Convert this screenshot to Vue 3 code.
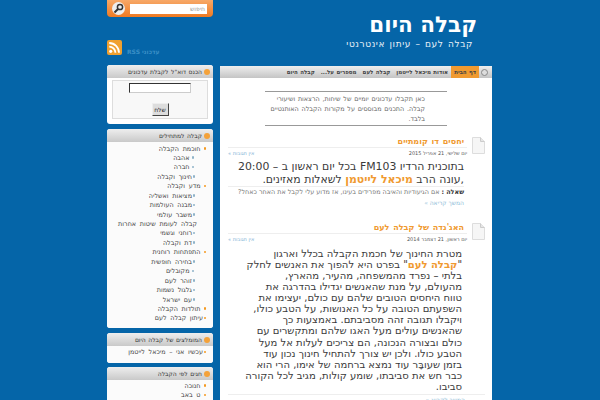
<script setup>
const nav = ['דף הבית','אודות מיכאל לייטמן','קבלה לעם','מספרים על...','קבלה היום']
const menu = [
  ['חוכמת הקבלה','o'],['אהבה','b'],['חברה','b'],['חינוך וקבלה','bj'],['מדע וקבלה','o'],['מציאות ואשליה','bj'],['מבנה העולמות','bj'],['משבר עולמי','bj'],['קבלה לעומת שיטות אחרות','n'],['רוחני וגשמי','bj'],['דת וקבלה','bj'],['התפתחות רוחנית','o'],['בחירה חופשית','bj'],['מקובלים','b'],['זוהר לעם','bj'],['גלגול נשמות','bj'],['עם ישראל','bj'],['תולדות הקבלה','o'],['עיתון קבלה לעם','oj']
]
const lines = ['מטרת החינוך של חכמת הקבלה בכלל וארגון','בפרט היא להפוך את האנשים לחלק','בלתי – נפרד מהמשפחה, מהעיר, מהארץ,','מהעולם, על מנת שהאנשים יגדילו בהדרגה את','טווח היחסים הטובים שלהם עם כולם, יעצימו את','השפעתם הטובה על כל האנושות, על הטבע כולו,','ויקבלו תגובה זהה מסביבתם. באמצעות כך','שהאנשים עולים מעל האגו שלהם ומתקשרים עם','כולם ובצורה הנכונה, הם צריכים לעלות אל מעל','הטבע כולו. ולכן יש צורך להתחיל חינוך נכון עוד','בזמן שעובָּר עוד נמצא ברחמה של אימו, הרי הוא','כבר חש את סביבתו, שומע קולות, מגיב לכל הקורה','סביבו.']
</script>

<template>
  <div class="page" dir="ltr">
    <aside class="side">
      <div class="search">
        <span class="lens"><svg width="13" height="13" viewBox="0 0 13 13"><circle cx="8" cy="5" r="2.6" fill="none" stroke="#333" stroke-width="1.5"/><path d="M6 7 2.5 10.5" stroke="#333" stroke-width="2"/></svg></span>
        <div class="field" dir="rtl">חיפוש</div>
      </div>
      <div class="rss">
        <svg width="15" height="15" viewBox="0 0 15 15"><rect width="15" height="15" rx="2" fill="#f0a030"/><circle cx="3.7" cy="11.3" r="1.6" fill="#fff"/><path d="M2.2 6.6a6.2 6.2 0 0 1 6.2 6.2M2.2 3a9.8 9.8 0 0 1 9.8 9.8" fill="none" stroke="#fff" stroke-width="1.8"/></svg>
        <span dir="rtl">עדכוני RSS</span>
      </div>
      <section class="panel">
        <h3 dir="rtl"><i class="ball"></i>הכנס דוא"ל לקבלת עדכונים</h3>
        <div class="form">
          <div class="inner">
            <div class="input"></div>
            <div class="send">שלח</div>
          </div>
        </div>
      </section>
      <section class="panel">
        <h3 dir="rtl"><i class="ball"></i>קבלה למתחילים</h3>
        <ul class="list" dir="rtl">
          <li v-for="m in menu" :key="m[0]" :class="m[1]">{{ m[0] }}</li>
        </ul>
      </section>
      <section class="panel">
        <h3 dir="rtl"><i class="ball"></i>המומלצים של קבלה היום</h3>
        <ul class="list rec" dir="rtl"><li class="oj">עכשיו אני – מיכאל לייטמן</li></ul>
      </section>
      <section class="panel">
        <h3 dir="rtl"><i class="ball"></i>חגים לפי הקבלה</h3>
        <ul class="list holidays" dir="rtl"><li class="o">חנוכה</li><li class="o">ט באב</li></ul>
      </section>
    </aside>
    <div class="right">
      <header class="head" dir="rtl">
        <h1>קבלה היום</h1>
        <p>קבלה לעם – עיתון אינטרנטי</p>
      </header>
      <main class="main">
        <nav class="nav" dir="rtl">
          <i class="dot"></i>
          <a v-for="(n,i) in nav" :key="n" :class="{ on: i===0 }">{{ n }}</a>
        </nav>
        <div class="content" dir="rtl">
          <blockquote>כאן תקבלו עדכונים יומיים של שיחות, הרצאות ושיעורי קבלה. התכנים מבוססים על מקורות הקבלה האותנטיים בלבד.</blockquote>
          <article>
            <div class="top">
              <svg class="doc" width="13" height="17" viewBox="0 0 13 17"><path d="M.5.5h8l4 4v12H.5z" fill="#f6f6f6" stroke="#ddd"/><path d="M8.5.5v4h4" fill="#e6e6e6" stroke="#ccc"/></svg>
              <div class="heading">
                <h2>יחסים דו קומתיים</h2>
                <div class="meta"><span>יום שלישי, 21 אפריל 2015</span><a>אין תגובות »</a></div>
              </div>
            </div>
            <div class="text">
              <p class="big">בתוכנית הרדיו FM103 בכל יום ראשון ב – 20:00<br>,עונה הרב <b>מיכאל לייטמן</b> לשאלות מאזינים.</p>
              <p class="small"><strong>שאלה :</strong> אם הגיעודיות והאיבה מפרידים בעינו, אז מדוע עלי לקבל את האחר כאחל?</p>
              <a class="more">המשך קריאה »</a>
            </div>
          </article>
          <article class="second">
            <div class="top">
              <svg class="doc" width="13" height="17" viewBox="0 0 13 17"><path d="M.5.5h8l4 4v12H.5z" fill="#f6f6f6" stroke="#ddd"/><path d="M8.5.5v4h4" fill="#e6e6e6" stroke="#ccc"/></svg>
              <div class="heading">
                <h2>האג'נדה של קבלה לעם</h2>
                <div class="meta"><span>יום ראשון, 21 דצמבר 2014</span><a>אין תגובות »</a></div>
              </div>
            </div>
            <div class="long">
              <div v-for="(l,i) in lines" :key="i"><template v-if="i===1">"<b>קבלה לעם</b>" </template>{{ l }}</div>
            </div>
            <a class="more cut">המשך לקרוא »</a>
          </article>
        </div>
      </main>
    </div>
  </div>
</template>

<style>
html, body { margin: 0; height: 100%; overflow: hidden; background: #0565a8; }
</style>

<style scoped>
.page { width: 600px; height: 400px; overflow: hidden; display: flex; gap: 7px; padding-left: 107px; box-sizing: border-box; font-family: "DejaVu Sans", sans-serif; color: #444; }
.side { width: 106px; flex: none; }
.search { height: 17px; background: linear-gradient(#f7a868, #ef7a22); border-radius: 0 0 4px 4px; display: flex; align-items: center; gap: 5px; padding: 0 5px; box-sizing: border-box; }
.lens { width: 13px; height: 13px; border-radius: 50%; background: #eee; display: flex; flex: none; }
.field { width: 77px; height: 10px; background: #fff; font-size: 6px; line-height: 10px; color: #999; padding: 0 2px; box-sizing: border-box; }
.rss { height: 48px; box-sizing: border-box; padding-top: 23px; display: flex; align-items: flex-start; gap: 5px; font-size: 6px; color: #3a8fc6; }
.rss span { margin-top: 8px; line-height: 8px; font-weight: bold; }
.panel { background: #fff; border-radius: 3px; overflow: hidden; margin-bottom: 4.5px; }
.panel h3 { margin: 0; height: 13px; background: linear-gradient(#eee, #c9c9c9); font-size: 6px; line-height: 13px; font-weight: normal; color: #333; padding-right: 3px; word-spacing: .6px; }
.ball { display: inline-block; width: 6px; height: 6px; border-radius: 50%; background: #f4a23a; margin-left: 2px; vertical-align: -1px; }
.form { padding: 2px 5px; height: 46px; box-sizing: border-box; }
.inner { border: 1px solid #ddd; height: 39px; background: #f8f8f8; display: flex; flex-direction: column; align-items: center; padding-top: 2px; box-sizing: border-box; }
.input { width: 60px; height: 8px; background: #fff; border: 1px solid; border-color: #333 #ccc #ccc #333; }
.send { margin-top: 10px; width: 15px; height: 11px; border: 1px solid; border-color: #eee #444 #444 #eee; background: #ddd; font-size: 6px; line-height: 11px; text-align: center; color: #222; }
.list { list-style: none; margin: 0; padding: 3px 0 4.5px; font-size: 6.4px; word-spacing: 1.6px; color: #444; background: #fbfbfb; }
.list li { height: 9.45px; line-height: 9.45px; white-space: nowrap; }
.list li::before { content: ""; display: inline-block; width: 2.5px; height: 2.5px; border-radius: 50%; vertical-align: 1px; }
.list li.o, .list li.oj { padding-right: 7px; }
.list li.o::before { background: #f49a22; margin-left: 3px; }
.list li.oj::before { background: #f49a22; margin-left: .5px; }
.list li.b { padding-right: 19px; }
.list li.b::before { background: #8fb3c9; margin-left: 2px; }
.list li.bj { padding-right: 18px; }
.list li.bj::before { background: #8fb3c9; margin-left: .5px; }
.list li.n { padding-right: 16px; }
.list li.n::before { display: none; }
.rec { padding: 2.5px 0 5px; }
.holidays { padding: 1.5px 0 4px; }
.right { width: 272px; flex: none; }
.head { height: 66px; color: #fff; padding-right: 15px; box-sizing: border-box; }
.head h1 { margin: 0; padding-top: 12px; font-size: 21.5px; line-height: 26px; font-weight: bold; }
.head p { margin: 1px 0 0; font-size: 9px; line-height: 10px; padding-right: 4px; color: #eaf2f8; word-spacing: 1px; letter-spacing: .6px; }
.main { background: #fff; border-radius: 3px 3px 0 0; }
.nav { height: 12px; background: linear-gradient(#eee, #c4c4c4); display: flex; align-items: stretch; font-size: 5.5px; font-weight: bold; color: #444; line-height: 12px; word-spacing: .5px; padding-right: 4px; }
.dot { width: 5px; height: 5px; border: 1px solid #888; border-radius: 50%; background: #ddd; margin: 2.5px 0 0 2px; flex: none; }
.nav a { padding: 0 3px; white-space: nowrap; }
.nav a.on { background: #f09a30; }
.content { padding: 0 7px 0 8px; }
blockquote { margin: 13px 38px 0 37px; border-top: 1px solid #999; border-bottom: 1px solid #999; padding: 1.5px 22px 1.5px 5px; font-size: 6.4px; line-height: 10px; color: #666; word-spacing: .7px; }
article { margin-top: 11px; }
.second { margin-top: 15px; }
.top { display: flex; align-items: flex-start; gap: 5px; }
.doc { flex: none; }
.heading { flex: 1; min-width: 0; }
h2 { margin: 0; font-size: 8px; line-height: 9px; color: #f09a30; height: 10px; padding-right: 3px; word-spacing: 1px; }
.meta { display: flex; justify-content: space-between; border-top: 1px solid #eee; padding-top: 1px; font-size: 5px; line-height: 8px; color: #555; }
.meta a { color: #7fb2d5; }
.text { padding-right: 21px; }
.big { margin: 4px 0 0; font-size: 10.9px; line-height: 12.5px; color: #3a3a3a; border-bottom: 1px solid #eee; white-space: nowrap; }
.big b, .long b { color: #f09a30; font-weight: bold; }
.small { margin: 1px 0 0; font-size: 6.4px; line-height: 9px; color: #777; white-space: nowrap; }
.small strong { color: #333; }
.more { display: block; font-size: 6px; line-height: 10px; margin-top: 1px; color: #8fbdd8; }
.long { margin-top: 5px; font-size: 10px; line-height: 11.07px; color: #3a3a3a; padding-right: 23px; }
.long div { white-space: nowrap; }
.cut { border-top: 1px solid #eee; padding-right: 20px; margin-top: 2px; }
</style>
